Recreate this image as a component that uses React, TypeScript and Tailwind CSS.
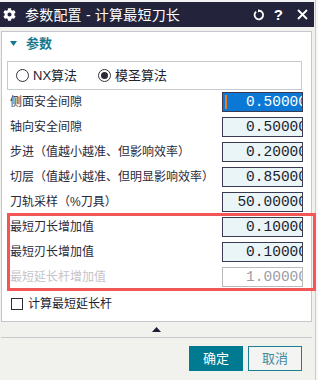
import { FaCog } from 'react-icons/fa'

const cjk = "font-['Liberation_Sans','Noto_Sans_CJK_SC',sans-serif]"
const mono = "font-['Liberation_Mono','Noto_Sans_CJK_SC',monospace]"

interface Row {
  label: string
  value: string
  state?: 'selected' | 'disabled'
}

const rows: Row[] = [
  { label: '侧面安全间隙', value: '0.50000', state: 'selected' },
  { label: '轴向安全间隙', value: '0.50000' },
  { label: '步进（值越小越准、但影响效率）', value: '0.20000' },
  { label: '切层（值越小越准、但明显影响效率）', value: '0.85000' },
  { label: '刀轨采样（%刀具）', value: '50.00000' },
  { label: '最短刀长增加值', value: '0.10000' },
  { label: '最短刃长增加值', value: '0.10000' },
  { label: '最短延长杆增加值', value: '1.00000', state: 'disabled' },
]

function NumberBox({ value, state }: { value: string; state?: Row['state'] }) {
  const box =
    state === 'selected'
      ? 'bg-[#0a78d4] border-[#3a3a52] text-white'
      : state === 'disabled'
        ? 'bg-white border-[#b9b9bf] text-[#9c9ca4]'
        : 'bg-[#eaf5f8] border-[#3a3a52] text-[#1e1e2c]'
  return (
    <div className={`relative w-[81px] h-[20px] border ${box} overflow-hidden flex items-center justify-end`}>
      {state === 'selected' && (
        <span className="absolute left-[2px] top-[2px] w-[1.5px] h-[14px] bg-[#f07b1c]" />
      )}
      <span className={`${mono} text-[14.5px] leading-none mr-[-5px] whitespace-nowrap`}>{value}</span>
    </div>
  )
}

function Radio({ checked, label }: { checked?: boolean; label: string }) {
  return (
    <div className="flex items-center gap-[4px]">
      <span className="w-[13px] h-[13px] rounded-full border border-[#333340] bg-white flex items-center justify-center">
        {checked && <span className="w-[7px] h-[7px] rounded-full bg-[#2a2a34]" />}
      </span>
      <span className="text-[13px] text-[#22222e] leading-none">{label}</span>
    </div>
  )
}

export default function App() {
  return (
    <div className={`relative w-[318px] h-[380px] bg-[#f7f7f7] overflow-hidden ${cjk}`}>
      <div className="w-[316px] h-full bg-[#f1f1ee] border-r border-[#cacaca] flex flex-col">
        {/* Title */}
        <div className="h-[2px] bg-[#f4f4f4]" />
        <div className="h-[25px] w-[314px] bg-[#23233b] flex items-center text-white">
          <FaCog className="ml-[3px] w-[13px] h-[13px]" />
          <span className="ml-[9px] text-[14px] leading-none tracking-[0.2px]">参数配置 - 计算最短刀长</span>
          <div className="ml-auto flex items-center mr-[6px]">
            <svg className="w-[12px] h-[12px]" viewBox="0 0 12 12" fill="none">
              <path d="M3.2 2.6 A4.3 4.3 0 1 0 6 1.7" stroke="white" strokeWidth="1.8" />
              <path d="M5 0.2 L8.2 1.8 L5 3.6 Z" fill="white" />
            </svg>
            <span className="ml-[9px] text-[15px] font-bold leading-none font-['Liberation_Sans',sans-serif]">?</span>
            <svg className="ml-[14px] w-[11px] h-[11px]" viewBox="0 0 11 11">
              <path d="M1 1 L10 10 M10 1 L1 10" stroke="white" strokeWidth="1.8" />
            </svg>
          </div>
        </div>

        {/* Panel */}
        <div className="mt-[4px] ml-[1px] w-[311px] h-[291px] bg-white border border-[#c6c6cc] flex flex-col">
          <div className="h-[22px] flex items-center">
            <svg className="ml-[8px] w-[7px] h-[5px]" viewBox="0 0 7 5">
              <path d="M0 0 H7 L3.5 5 Z" fill="#16788f" />
            </svg>
            <span className="ml-[9px] text-[13px] font-bold text-[#16788f] leading-none">参数</span>
          </div>

          <div className="mt-[7px] ml-[5px] w-[295px] h-[29px] border border-[#c9c9cf] flex items-center pl-[8px] gap-[21px]">
            <Radio label="NX算法" />
            <Radio label="模圣算法" checked />
          </div>

          <div className="mt-[2px] flex flex-col gap-[5px]">
            {rows.map((r) => (
              <div key={r.label} className="h-[20px] flex items-center justify-between pl-[8px] pr-[8px]">
                <span
                  className={`text-[12px] leading-none ${
                    r.state === 'disabled' ? 'text-[#c4c4ca]' : 'text-[#2a2a3a]'
                  }`}
                >
                  {r.label}
                </span>
                <NumberBox value={r.value} state={r.state} />
              </div>
            ))}
          </div>

          <div className="mt-[10px] h-[13px] flex items-center pl-[9px] gap-[5px]">
            <span className="w-[12px] h-[12px] border border-[#2e2e38] bg-white" />
            <span className="text-[12px] text-[#22222e] leading-none">计算最短延长杆</span>
          </div>
        </div>

        {/* Collapse + buttons */}
        <div className="h-[15px] flex items-center justify-center w-[313px]">
          <svg className="w-[9px] h-[5px]" viewBox="0 0 9 5">
            <path d="M0 5 H9 L4.5 0 Z" fill="#1c1c34" />
          </svg>
        </div>
        <div className="ml-[1px] w-[311px] h-[1px] bg-[#c9c9cd]" />
        <div className="mt-[8px] ml-[1px] w-[311px] flex justify-end gap-[5px] pr-[10px]">
          <button className="w-[54px] h-[25px] bg-[#007a91] text-white text-[13px] leading-none">确定</button>
          <button className="w-[54px] h-[25px] border-[1.5px] border-[#1a7f92] bg-[#f4f4f2] text-[#3f8a9c] text-[13px] leading-none">
            取消
          </button>
        </div>
      </div>

      {/* annotation box */}
      <div className="absolute left-[7px] top-[213px] w-[309px] h-[78px] border-[3px] border-[#f25656]" />
    </div>
  )
}
